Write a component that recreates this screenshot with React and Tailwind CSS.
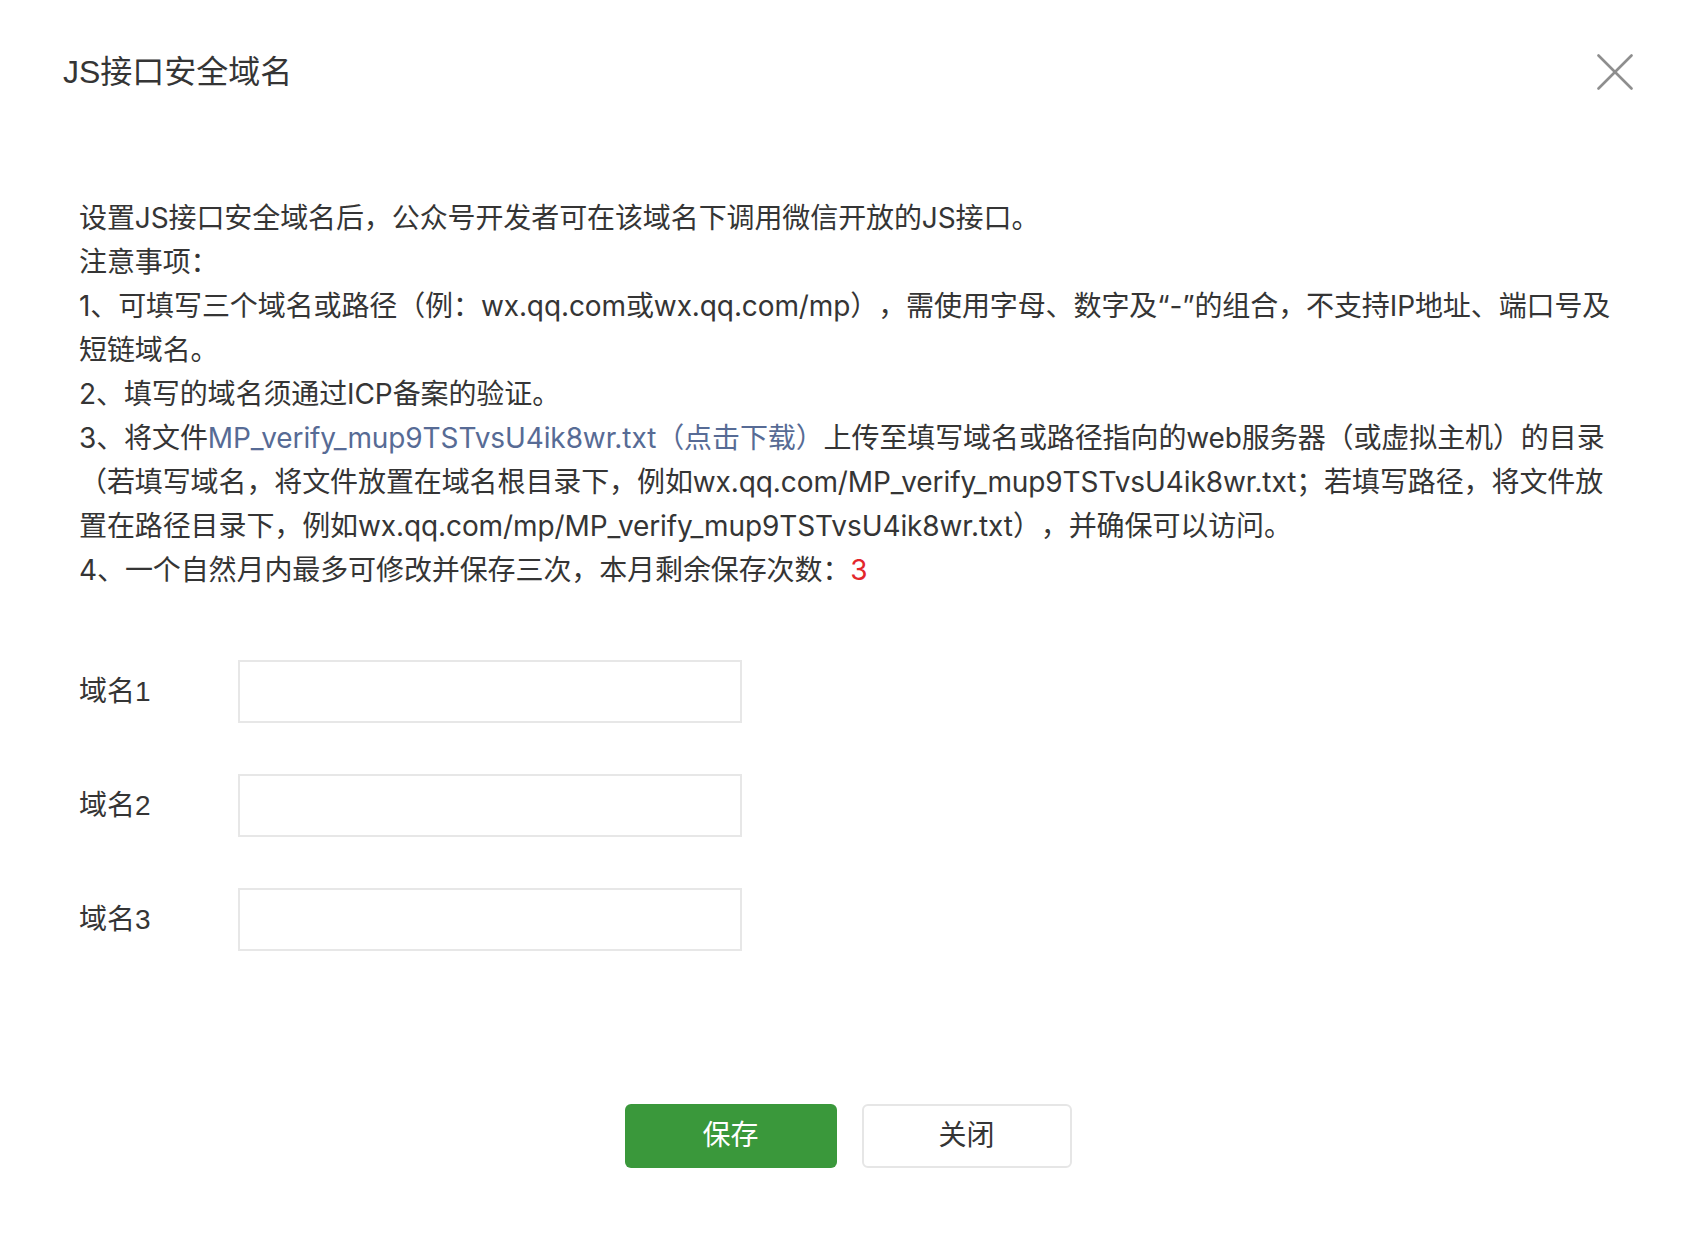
import React from 'react';

const lines = [
  '设置JS接口安全域名后，公众号开发者可在该域名下调用微信开放的JS接口。',
  '注意事项：',
];

const DomainRow = ({ label }) => (
  <div className="flex items-center h-[63px]">
    <span className="w-[159px]">{label}</span>
    <input type="text" className="w-[504px] h-[63px] border-2 border-[#e7e7e7] bg-white outline-none px-3" />
  </div>
);

export default function App() {
  return (
    <div className="min-h-screen bg-white text-[#353535] font-['Liberation_Sans','Noto_Sans_CJK_SC',sans-serif] [text-spacing-trim:space-all]">
      <div className="flex items-center justify-between pl-[63px] pr-[63px] pt-[50px]">
        <h2 className="text-[32px] leading-[44px] font-normal">JS接口安全域名</h2>
        <button className="h-[44px] flex items-center">
          <svg width="36" height="36" viewBox="0 0 36 36" fill="none" stroke="#8e8e8e" strokeWidth="2.6" strokeLinecap="round">
            <line x1="1.5" y1="1.5" x2="34.5" y2="34.5" />
            <line x1="34.5" y1="1.5" x2="1.5" y2="34.5" />
          </svg>
        </button>
      </div>

      <div className="pl-[79px] mt-[102px] text-[28px] leading-[44px] whitespace-nowrap tracking-[-0.1px] font-['Inter','Noto_Sans_CJK_SC',sans-serif]">
        {lines.map((l) => (
          <p key={l}>{l}</p>
        ))}
        <p>
          1、可填写三个域名或路径（例：wx.qq.com或wx.qq.com/mp），需使用字母、数字及“-”的组合，不支持IP地址、端口号及
          <br />
          短链域名。
        </p>
        <p>2、填写的域名须通过ICP备案的验证。</p>
        <p>
          3、将文件<a href="#" className="text-[#576b95]">MP_verify_mup9TSTvsU4ik8wr.txt（点击下载）</a>上传至填写域名或路径指向的web服务器（或虚拟主机）的目录
          <br />
          （若填写域名，将文件放置在域名根目录下，例如wx.qq.com/MP_verify_mup9TSTvsU4ik8wr.txt；若填写路径，将文件放
          <br />
          置在路径目录下，例如wx.qq.com/mp/MP_verify_mup9TSTvsU4ik8wr.txt），并确保可以访问。
        </p>
        <p>
          4、一个自然月内最多可修改并保存三次，本月剩余保存次数：<span className="text-[#e3262b]">3</span>
        </p>
      </div>

      <div className="pl-[79px] mt-[68px] flex flex-col gap-[51px] text-[28px]">
        <DomainRow label="域名1" />
        <DomainRow label="域名2" />
        <DomainRow label="域名3" />
      </div>

      <div className="mt-[153px] flex justify-center gap-[25px] text-[28px]">
        <button className="w-[212px] h-[64px] rounded-[6px] bg-[#3a983b] text-white">保存</button>
        <button className="w-[210px] h-[64px] rounded-[6px] border-2 border-[#e6e6e6] bg-white text-[#353535]">关闭</button>
      </div>
    </div>
  );
}
